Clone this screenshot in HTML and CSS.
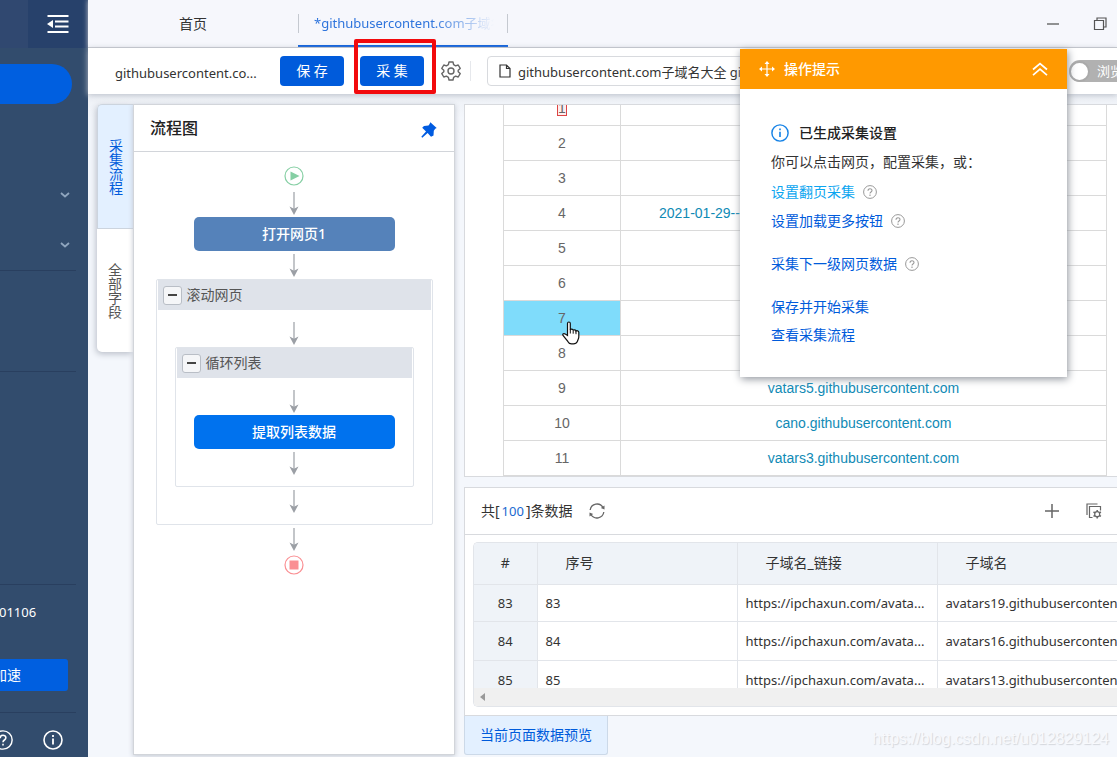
FILE: index.html
```html
<!DOCTYPE html>
<html lang="zh-CN">
<head>
<meta charset="utf-8">
<title>采集器</title>
<link rel="stylesheet" href="styles.css">
</head>
<body>
<svg class="defs" aria-hidden="true">
  <symbol id="arrow" viewBox="0 0 10 23"><path d="M5 0v18" stroke="#9b9fa5" stroke-width="1.2"/><path d="M.5 14.5 5 23l4.500-8.500L5 16.800z" fill="#9b9fa5"/></symbol>
  <symbol id="help" viewBox="0 0 14 14"><circle cx="7" cy="7" r="6.400" fill="none" stroke="currentColor"/><path d="M5 5.700c0-2.700 4-2.600 4-.2 0 1.500-2 1.500-2 3M7 9.600v1.300" fill="none" stroke="currentColor" stroke-width="1.100"/></symbol>
  <symbol id="info" viewBox="0 0 20 20"><circle cx="10" cy="10" r="9" fill="none" stroke="currentColor" stroke-width="1.600"/><path d="M10 8.500v6M10 5v1.900" stroke="currentColor" stroke-width="1.800"/></symbol>
  <symbol id="chevron" viewBox="0 0 10 6"><path d="m1 1 4 3.500L9 1" fill="none" stroke="#8fa5be" stroke-width="1.800"/></symbol>
</svg>

<aside class="sidebar">
  <div class="side-head">
    <button class="collapse" aria-label="收起菜单">
      <svg width="22" height="20" viewBox="0 0 22 20"><path d="M.5 2h21M.5 18h21M8 7.500h13.500M8 12.500h13.500" stroke="#fff" stroke-width="1.800"/><path d="M6 6v8L0 10z" fill="#fff"/></svg>
    </button>
  </div>
  <button class="side-new" aria-label="新建"></button>
  <nav class="side-nav">
    <button aria-label="展开"><svg width="10" height="6"><use href="#chevron"/></svg></button>
    <button aria-label="展开"><svg width="10" height="6"><use href="#chevron"/></svg></button>
  </nav>
  <div class="side-tools"></div>
  <div class="side-account">
    <span class="user">01106</span>
    <button class="speed">加速</button>
  </div>
  <div class="side-foot">
    <svg class="foot-icon" viewBox="0 0 14 14"><use href="#help"/></svg>
    <svg class="foot-icon" viewBox="0 0 20 20"><use href="#info"/></svg>
  </div>
</aside>

<div class="main">
  <header class="tabs">
    <a class="tab home" href="#">首页</a>
    <a class="tab active" href="#"><span>*githubusercontent.com子域名</span></a>
    <div class="window-buttons">
      <button aria-label="最小化"><svg width="14" height="14" viewBox="0 0 14 14"><path d="M1 7h12" stroke="#777" stroke-width="1.600"/></svg></button>
      <button aria-label="还原"><svg width="14" height="14" viewBox="0 0 14 14"><path d="M1.500 3.500h9v9h-9zM4 3.500V1h9v9h-2.500" fill="none" stroke="#555" stroke-width="1.200"/></svg></button>
    </div>
  </header>

  <div class="toolbar">
    <span class="task-name">githubusercontent.co...</span>
    <button class="primary">保 存</button>
    <div class="marked"><button class="primary">采 集</button></div>
    <button class="gear" aria-label="设置">
      <svg width="20" height="20" viewBox="0 0 20 20" fill="none" stroke="#666" stroke-width="1.400"><path d="M8 1h4l.6 2.600 2 1.200 2.600-.8 2 3.400-2 1.800v1.600l2 1.800-2 3.400-2.600-.8-2 1.200L12 19H8l-.6-2.600-2-1.200-2.600.8-2-3.400 2-1.800V9.200l-2-1.800 2-3.400 2.600.8 2-1.200z" stroke-linejoin="round"/><circle cx="10" cy="10" r="3"/></svg>
    </button>
    <div class="url">
      <svg width="12" height="14" viewBox="0 0 12 14"><path d="M1 1h6.500L11 4.500V13H1zM7.500 1v3.500H11" fill="none" stroke="#333" stroke-width="1.200"/></svg>
      <input type="text" aria-label="网址" value="githubusercontent.com子域名大全 githubusercontent">
    </div>
    <button class="toggle"><i></i>浏览</button>
  </div>

  <div class="workspace">
    <nav class="vtabs">
      <button class="vtab on">采集流程</button>
      <button class="vtab">全部字段</button>
    </nav>
    <section class="flow">
      <header class="flow-head">
        <h2>流程图</h2>
        <svg width="16" height="16" viewBox="0 0 16 16"><path d="M9.300.3 15.700 6l-1.500.7-1.400 2.100-.3 4.700L10 14.700 6.600 11 1.300 15.700.3 14.700 5 9.400 1.200 5.700 3 4l4.500-.4L8.600 2z" fill="#005be0"/></svg>
      </header>
      <div class="chart">
        <svg class="dot" viewBox="0 0 20 20"><circle cx="10" cy="10" r="9" fill="none" stroke="#86cfa4" stroke-width="1.200"/><path d="M6.500 5.500v9L15.500 10z" fill="#86cfa4"/></svg>
        <svg class="arrow"><use href="#arrow"/></svg>
        <div class="node open">打开网页1</div>
        <svg class="arrow"><use href="#arrow"/></svg>
        <div class="group outer">
          <div class="group-head"><button aria-label="折叠"></button>滚动网页</div>
          <svg class="arrow first"><use href="#arrow"/></svg>
          <div class="group">
            <div class="group-head"><button aria-label="折叠"></button>循环列表</div>
            <svg class="arrow first"><use href="#arrow"/></svg>
            <div class="node extract">提取列表数据</div>
            <svg class="arrow last"><use href="#arrow"/></svg>
          </div>
          <svg class="arrow last"><use href="#arrow"/></svg>
        </div>
        <svg class="arrow"><use href="#arrow"/></svg>
        <svg class="dot end" viewBox="0 0 20 20"><circle cx="10" cy="10" r="9" fill="none" stroke="#fa8f93" stroke-width="1.200"/><path d="M5.500 5.500h9v9h-9z" fill="#fa8f93"/></svg>
      </div>
    </section>

    <div class="right">
      <section class="page-view">
        <table class="page-table">
          <tr><td><span class="boxed">1</span></td><td></td></tr>
          <tr><td>2</td><td></td></tr>
          <tr><td>3</td><td></td></tr>
          <tr><td>4</td><td class="start"><a href="#">2021-01-29--</a></td></tr>
          <tr><td>5</td><td></td></tr>
          <tr><td>6</td><td></td></tr>
          <tr><td class="hover">7
            <svg class="hand" width="18" height="24" viewBox="0 0 18 24"><path d="M5.500 14.500V2.500C5.500.5 8.300.5 8.300 2.500V9c.3-1.400 2.700-1.200 2.900.5.400-1 2.600-.8 2.800.7.600-.9 2.700-.5 2.800 1V16c0 1.500-1 2.800-1.300 4.200-.8 1.800-2 2.700-4 2.700H9.500c-1.800 0-3-1-3.700-2.500L1 14.500c-.8-1.700 1-2.500 2.300-1.400z" fill="#fff" stroke="#111" stroke-width="1.200"/><path d="M8.300 8.500v4M11.200 9.500v3.200M14 10.200v3" stroke="#111"/></svg>
          </td><td></td></tr>
          <tr><td>8</td><td></td></tr>
          <tr><td>9</td><td><a href="#">vatars5.githubusercontent.com</a></td></tr>
          <tr><td>10</td><td><a href="#">cano.githubusercontent.com</a></td></tr>
          <tr><td>11</td><td><a href="#">vatars3.githubusercontent.com</a></td></tr>
          <tr><td></td><td></td></tr>
        </table>
      </section>

      <section class="data">
        <header class="data-head">
          <span>共[<b>100</b>]条数据</span>
          <button aria-label="刷新"><svg width="16" height="16" viewBox="0 0 16 16"><path d="M1.200 7A6.900 6.900 0 0 1 14 4.500M14.800 9A6.900 6.900 0 0 1 2 11.500" fill="none" stroke="#666" stroke-width="1.300"/><path d="M15.500 2.500v4l-3.700-1.500zM.5 13.500v-4l3.700 1.500z" fill="#666"/></svg></button>
          <button class="push" aria-label="添加"><svg width="14" height="14" viewBox="0 0 14 14"><path d="M7 0v14M0 7h14" stroke="#666" stroke-width="1.500"/></svg></button>
          <button class="gap" aria-label="字段设置"><svg width="16" height="16" viewBox="0 0 16 16" fill="none" stroke="#666" stroke-width="1.200"><path d="M1 12V1h10.500M6.500 14.500H3.500v-11h11v4"/><circle cx="11.200" cy="11.200" r="2.500"/><path d="M11.200 7v1.700M11.200 13.700v1.700M7.500 9l1.500.9M13.400 12.500l1.500.9M7.500 13.400l1.500-.9M13.400 9.900l1.500-.9" stroke-width="1.500"/></svg></button>
        </header>
        <div class="data-box">
          <div class="data-scroll">
            <table class="data-table">
              <thead><tr><th class="num">#</th><th>序号</th><th>子域名_链接</th><th>子域名</th></tr></thead>
              <tbody>
                <tr><th class="num">83</th><td>83</td><td>https://ipchaxun.com/avata...</td><td>avatars19.githubuserconten...</td></tr>
                <tr><th class="num">84</th><td>84</td><td>https://ipchaxun.com/avata...</td><td>avatars16.githubuserconten...</td></tr>
                <tr><th class="num">85</th><td>85</td><td>https://ipchaxun.com/avata...</td><td>avatars13.githubuserconten...</td></tr>
              </tbody>
            </table>
          </div>
          <div class="hscroll"><svg width="5" height="8" viewBox="0 0 5 8"><path d="M5 0v8L0 4z" fill="#999"/></svg></div>
        </div>
      </section>
      <footer class="bottom">
        <button class="preview">当前页面数据预览</button>
        <span class="mark">https://blog.csdn.net/u012829124</span>
      </footer>
    </div>
  </div>
</div>

<section class="tips">
  <header class="tips-head">
    <svg width="16" height="16" viewBox="0 0 16 16"><path d="M8 1v14M1 8h14" stroke="#fff" stroke-width="1.200"/><path d="m5.500 3 2.500-3 2.500 3zM5.500 13 8 16l2.500-3zM3 5.500.0 8 3 10.500zM13 5.500 16 8l-3 2.500z" fill="#fff"/></svg>
    <h3>操作提示</h3>
    <button aria-label="收起"><svg width="16" height="14" viewBox="0 0 16 14"><path d="m1 7.500 7-6 7 6M1 13.200l7-6 7 6" fill="none" stroke="#fff" stroke-width="1.700"/></svg></button>
  </header>
  <div class="tips-body">
    <h4><svg width="18" height="18"><use href="#info"/></svg>已生成采集设置</h4>
    <p>你可以点击网页，配置采集，或：</p>
    <div class="line"><a class="light" href="#">设置翻页采集</a><svg class="q"><use href="#help"/></svg></div>
    <div class="line"><a href="#">设置加载更多按钮</a><svg class="q"><use href="#help"/></svg></div>
    <div class="line apart"><a href="#">采集下一级网页数据</a><svg class="q"><use href="#help"/></svg></div>
    <div class="line apart"><a href="#">保存并开始采集</a></div>
    <div class="line"><a href="#">查看采集流程</a></div>
  </div>
</section>
</body>
</html>
```
FILE: styles.css
```css
* { box-sizing: border-box; }

body {
  margin: 0;
  display: flex;
  height: 100vh;
  overflow: hidden;
  position: relative;
  background: #f4f7fc;
  color: #333;
  font: 14px/20px "Noto Sans", "Noto Sans CJK SC", sans-serif;
}

button { border: 0; padding: 0; background: none; font: inherit; color: inherit; }
a { color: #005bdb; text-decoration: none; }
h2, h3, h4, p { margin: 0; }
svg { display: block; flex: none; }
.defs { position: absolute; width: 0; height: 0; }

/* Sidebar */
.sidebar {
  flex: 0 0 88px;
  min-width: 0;
  overflow: hidden;
  display: flex;
  flex-direction: column;
  background: #324c6d;
  color: #fff;
}
.side-head { height: 48px; display: flex; justify-content: flex-end; background: #304870; }
.collapse { width: 60px; background: #27416b; display: flex; align-items: center; justify-content: center; }
.side-new { height: 40px; margin: 16px 16px 0 0; background: #005fe0; border-radius: 0 20px 20px 0; }
.side-nav { margin: 66px 12px 0 0; border-bottom: 1px solid #293f5f; }
.side-nav button { display: flex; width: 100%; height: 50px; align-items: center; justify-content: flex-end; padding-right: 6px; }
.side-tools { height: 101px; margin-right: 12px; border-bottom: 1px solid #293f5f; }
.side-account {
  margin: auto 12px 0 0;
  height: 129px;
  padding-top: 17px;
  border-top: 1px solid #293f5f;
  border-bottom: 1px solid #293f5f;
  display: flex;
  flex-direction: column;
  align-items: flex-start;
}
.user { margin-left: -1px; font-size: 13px; }
.speed { height: 32px; width: 68px; margin-top: 37px; background: #005fe0; border-radius: 0 3px 3px 0; text-align: left; text-indent: -7px; }
.side-foot { height: 44px; display: flex; align-items: center; justify-content: flex-end; gap: 30px; padding: 10px 25px 0 0; }
.foot-icon { width: 20px; height: 20px; }

/* Tabs */
.main { flex: 1; min-width: 0; display: flex; flex-direction: column; }
.tabs { flex: 0 0 48px; display: flex; background: #f6f7fc; border-bottom: 1px solid #c6c8cd; box-shadow: 0 0 5px #c6c8cd; }
.tab { height: 47px; display: flex; align-items: center; justify-content: center; position: relative; }
.home { width: 210px; color: #333; }
.active { width: 210px; border-bottom: 2px solid #0058dc; padding: 0 14px 0 16px; color: #2e74dc; font-size: 13px; }
.active span { overflow: hidden; white-space: nowrap; -webkit-mask-image: linear-gradient(90deg, #000 65%, transparent 100%); mask-image: linear-gradient(90deg, #000 65%, transparent 100%); }
.active::before, .active::after { content: ""; position: absolute; top: 14px; height: 19px; width: 1px; background: #c5c9d0; }
.active::before { left: 0; }
.active::after { right: 0; }
.window-buttons { margin-left: auto; display: flex; align-items: center; gap: 33px; padding-right: 10px; }

/* Toolbar */
.toolbar { flex: 0 0 46px; display: flex; align-items: center; background: #fff; padding-left: 27px; box-shadow: 0 1px 6px #b9bec8; position: relative; }
.task-name { width: 165px; white-space: nowrap; font-size: 13px; padding-top: 3px; }
.primary { display: block; width: 64px; height: 30px; background: #005bdb; color: #fff; border-radius: 4px; }
.marked { position: relative; margin-left: 16px; }
.marked::after { content: ""; position: absolute; inset: -17px -12px -8px -6px; border: 4px solid #f20a0d; border-radius: 2px; }
.gear { margin-left: 17px; padding-right: 9px; border-right: 1px solid #e6e8ec; }
.url { flex: 1; min-width: 0; height: 30px; margin-left: 16px; display: flex; align-items: center; gap: 7px; padding-left: 11px; border: 1px solid #d8dade; border-radius: 4px; }
.url input { flex: 1; min-width: 0; border: 0; outline: 0; padding: 2px 0 0; font: inherit; font-size: 13px; color: inherit; background: none; }
.toggle { flex: none; width: 76px; height: 22px; margin: 0 -28px 0 12px; display: flex; align-items: center; gap: 7px; border-radius: 11px; background: #b1b1b1; color: #fff; font-size: 13px; }
.toggle i { width: 21px; height: 21px; border: 2px solid #aaa; border-radius: 50%; background: #fff; }

/* Workspace */
.workspace { flex: 1; min-height: 0; display: flex; padding: 10px 0 2px 9px; background: linear-gradient(#edf0f5, #f4f7fc 24px); }
.vtabs { width: 36px; display: flex; flex-direction: column; align-self: flex-start; background: #fff; border-radius: 5px 0 0 5px; box-shadow: -1px 2px 6px #b9bec8; }
.vtab { height: 123px; padding: 0 11px; line-height: 14px; color: #555; font-size: 14px; }
.vtab.on { height: 125px; background: #e3f0ff; color: #005bdb; border: 1px solid #ccd4de; border-right: 0; border-radius: 5px 0 0 0; }
.flow { width: 322px; display: flex; flex-direction: column; background: #fff; border: 1px solid #d2d5da; box-shadow: 0 1px 5px #c2c7d0; }
.flow-head { height: 47px; display: flex; align-items: center; justify-content: space-between; padding: 4px 17px 0 16px; border-bottom: 1px solid #d2d5da; }
.flow-head h2 { font-size: 16px; line-height: 24px; font-weight: 500; color: #222; margin-top: -4px; }
.chart { display: flex; flex-direction: column; align-items: center; padding: 14px 21px 0; }
.dot { width: 20px; height: 20px; margin-bottom: 3px; }
.end { margin-top: 2px; }
.arrow { width: 10px; height: 23px; margin: 3px 0 2px; }
.arrow.first { margin-top: 12px; }
.arrow.last { margin-bottom: 11px; }
.node { width: 201px; height: 34px; display: flex; align-items: center; justify-content: center; border-radius: 5px; color: #fff; font-size: 14px; font-weight: 500; }
.open { background: #5582ba; }
.extract { background: #0072ee; }
.group { width: 239px; display: flex; flex-direction: column; align-items: center; border: 1px solid #e0e4ea; border-radius: 2px; }
.group.outer { width: 277px; }
.group-head { align-self: stretch; height: 30px; margin: 0 1px; display: flex; align-items: center; gap: 5px; padding-left: 5px; background: #dfe3ea; font-size: 14px; color: #555; }
.group-head button { width: 19px; height: 19px; border: 1px solid #b9bec6; border-radius: 3px; background: #f5f6f8; display: flex; align-items: center; justify-content: center; }
.group-head button::before { content: ""; width: 9px; height: 2px; background: #444; }

/* Captured page */
.right { flex: 1; min-width: 0; margin-left: 9px; display: flex; flex-direction: column; }
.page-view { flex: 1; min-height: 0; overflow: hidden; background: #fff; border: 1px solid #d8dade; border-right: 0; padding: 0 10px 0 38px; }
.page-table { width: 100%; margin-top: -15px; border-collapse: collapse; table-layout: fixed; font: 14px/20px "Liberation Sans", sans-serif; color: #666; text-align: center; }
.page-table td { height: 35px; padding: 0; border: 1px solid #dadada; }
.page-table td:first-child { width: 117px; }
.page-table a { color: #108ab5; }
.page-table .start { text-align: left; padding-left: 38px; }
.page-table .hover { background: #7fdcfb; position: relative; }
.hand { position: absolute; left: 58px; top: 20px; z-index: 1; }
.boxed { display: inline-block; border: 1px solid #d44; background: #fdeeee; line-height: 14px; }

/* Data preview */
.data { flex: none; margin-top: 10px; background: #fff; border: 1px solid #d8dade; border-right: 0; padding-bottom: 8px; overflow: hidden; }
.data-head { height: 47px; display: flex; align-items: center; padding: 0 15px 0 16px; border-bottom: 1px solid #d8dade; }
.data-head b { font-weight: 400; font-size: 13px; color: #2069d0; padding: 0 2px; }
.data-head button { margin-left: 16px; }
.data-head .push { margin-left: auto; }
.data-head .gap { margin-left: 27px; }
.data-box { margin: 7px 0 0 8px; border: 1px solid #e2e5ea; border-right: 0; border-radius: 5px 0 0 5px; overflow: hidden; }
.data-scroll { height: 145px; overflow: hidden; }
.data-table { width: 663px; table-layout: fixed; border-collapse: collapse; }
.data-table th, .data-table td { height: 39px; padding: 0 8px; text-align: left; font-weight: 400; border: 1px solid #e2e5ea; border-top: 0; white-space: nowrap; }
.data-table tbody { font-size: 13px; }
.data-table thead th { height: 41px; padding-left: 28px; background: #eff3f8; width: 200px; }
.data-table tbody tr:first-child > * { height: 37px; }
.data-table .num, .data-table thead .num { width: 63px; padding: 0; text-align: center; background: #eff3f8; border-left: 0; }
.hscroll { height: 18px; display: flex; align-items: center; padding-left: 6px; background: #f0f0f0; }
.bottom { display: flex; justify-content: space-between; align-items: center; }
.preview { width: 144px; height: 39px; background: #e3f0ff; color: #005bdb; border: 1px solid #ccd9e8; border-top: 0; border-radius: 0 0 3px 3px; }
.mark { margin-right: 8px; font: 16px/20px "Liberation Sans", sans-serif; color: #f8f9fc; text-shadow: 1px 1px 1px #d3d6db; padding-top: 6px; }

/* Tips window */
.tips { position: absolute; z-index: 2; right: 50px; top: 49px; width: 327px; background: #fff; box-shadow: 1px 2px 8px #8f949c; }
.tips-head { height: 40px; display: flex; align-items: center; gap: 9px; padding: 0 19px; background: #ff9900; color: #fff; }
.tips-head h3 { font-size: 14px; font-weight: 500; }
.tips-head button { margin-left: auto; }
.tips-body { padding: 34px 31px 23px; }
.tips h4 { display: flex; align-items: center; gap: 10px; font-size: 14px; font-weight: 500; color: #222; }
.tips h4 svg { color: #1783e6; }
.tips p { margin: 9px 0 10px; }
.line { display: flex; align-items: center; gap: 8px; margin-bottom: 9px; }
.line.apart { margin-top: 23px; margin-bottom: 8px; }
.light { color: #0ba5f0; }
.q { width: 14px; height: 14px; color: #999; }
```
